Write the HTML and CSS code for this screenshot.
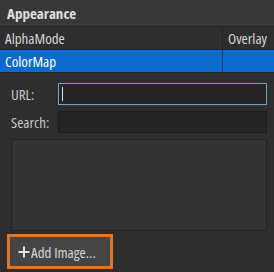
FILE: index.html
```html
<!DOCTYPE html>
<html>
<head>
  <link rel="stylesheet" href="styles.css">
</head>
<body>
  <div class="panel">
    <div class="section-title">Appearance</div>

    <div class="prop-row">
      <div class="prop-name">AlphaMode</div>
      <div class="prop-value">Overlay</div>
    </div>
    <div class="prop-row selected">
      <div class="prop-name">ColorMap</div>
      <div class="prop-value"></div>
    </div>

    <div class="picker">
      <div class="field">
        <label>URL:</label>
        <div class="input focused"><span class="caret"></span></div>
      </div>
      <div class="field">
        <label>Search:</label>
        <div class="input"></div>
      </div>

      <div class="image-list"></div>

      <button class="add-btn">
        <svg class="plus" width="12" height="12" viewBox="0 0 12 12">
          <path d="M6 0.5V11.5M0.5 6H11.5" stroke="#e2e2e2" stroke-width="2"/>
        </svg>
        Add Image...
      </button>
    </div>
  </div>
</body>
</html>
```

FILE: styles.css
```css
body {
  margin: 0;
  background: #2e2e2e;
  font-family: 'Open Sans', Roboto, sans-serif;
  font-stretch: 80%;
  font-size: 15px;
  color: #d6d6d6;
}

.panel {
  width: 274px;
  height: 272px;
  overflow: hidden;
}

.section-title {
  height: 26px;
  line-height: 26px;
  padding-left: 7px;
  background: #383838;
  border-bottom: 1px solid #232323;
  font-weight: bold;
  color: #e0e0e0;
}

.prop-row {
  display: flex;
  height: 22px;
  line-height: 22px;
  border-bottom: 1px solid #232323;
}

.prop-name {
  width: 217px;
  padding-left: 5px;
  border-right: 1px solid #232323;
}

.prop-value {
  flex: 1;
  padding-left: 5px;
  white-space: nowrap;
}

.prop-row.selected {
  background: #0b6acd;
  color: #fff;
}

.prop-row.selected .prop-name {
  border-right-color: #0a3f77;
}

.picker {
  padding: 10px 7px 5px 7px;
}

.field {
  display: flex;
  align-items: center;
  gap: 4px;
  margin-bottom: 6px;
}

.field label {
  width: 43px;
  padding-left: 4px;
  color: #c8c8c8;
}

.input {
  flex: 1;
  height: 20px;
  background: #262626;
  border: 1px solid #1c1c1c;
  display: flex;
  align-items: center;
}

.input.focused {
  border-color: #6aa7cc;
}

.caret {
  width: 1px;
  height: 14px;
  margin-left: 3px;
  background: #e0e0e0;
}

.image-list {
  height: 90px;
  margin: 0 0 3px 4px;
  background: #333333;
  border: 1px solid #222222;
}

.add-btn {
  height: 35px;
  width: 106px;
  padding: 0 0 0 8px;
  display: flex;
  align-items: center;
  white-space: nowrap;
  background: #454545;
  border: 3px solid #e07427;
  font-family: inherit;
  font-stretch: inherit;
  font-size: 15px;
  color: #d6d6d6;
}

.plus {
  margin-right: 1px;
}
```
